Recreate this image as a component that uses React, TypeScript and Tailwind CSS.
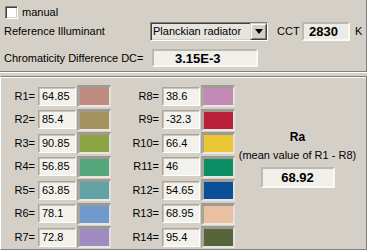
import React from 'react';

// ==========================================
// Data
// ==========================================

interface Sample {
  label: string;
  value: string;
  color: string;
}

const LEFT: Sample[] = [
  { label: 'R1=', value: '64.85', color: 'bg-[#bf8a80]' },
  { label: 'R2=', value: '85.4', color: 'bg-[#a59060]' },
  { label: 'R3=', value: '90.85', color: 'bg-[#8da442]' },
  { label: 'R4=', value: '56.85', color: 'bg-[#53a77a]' },
  { label: 'R5=', value: '63.85', color: 'bg-[#62a2a4]' },
  { label: 'R6=', value: '78.1', color: 'bg-[#7099cc]' },
  { label: 'R7=', value: '72.8', color: 'bg-[#9f8bc0]' },
];

const RIGHT: Sample[] = [
  { label: 'R8=', value: '38.6', color: 'bg-[#c28bb6]' },
  { label: 'R9=', value: '-32.3', color: 'bg-[#ba1f38]' },
  { label: 'R10=', value: '66.4', color: 'bg-[#e9c734]' },
  { label: 'R11=', value: '46', color: 'bg-[#0d8f66]' },
  { label: 'R12=', value: '54.65', color: 'bg-[#0a4f98]' },
  { label: 'R13=', value: '68.95', color: 'bg-[#ebbfa2]' },
  { label: 'R14=', value: '95.4', color: 'bg-[#57653a]' },
];

// ==========================================
// Small pieces
// ==========================================

const ValueBox: React.FC<{ value: string }> = ({ value }) => (
  <div className="w-[38px] h-[19px] flex items-center pl-[3px] bg-[#f2f1ec] border border-t-[#a9a59c] border-l-[#a9a59c] border-b-[#ffffff] border-r-[#ffffff] shadow-[inset_1px_1px_0_#c9c5bd]">
    {value}
  </div>
);

const Swatch: React.FC<{ color: string }> = ({ color }) => (
  <div className="w-[34px] h-[22px] border-t-[3px] border-l-[3px] border-b-2 border-r-2 border-t-[#9e9a91] border-l-[#a8a49b] border-b-[#e9e7e1] border-r-[#e3e1da]">
    <div className={`w-full h-full ${color}`} />
  </div>
);

const SampleRow: React.FC<{ sample: Sample; labelWidth: string }> = ({ sample, labelWidth }) => (
  <div className="h-[22px] flex items-center">
    <div className={`${labelWidth} text-right pr-[3px]`}>{sample.label}</div>
    <ValueBox value={sample.value} />
    <div className="ml-[1px]">
      <Swatch color={sample.color} />
    </div>
  </div>
);

// ==========================================
// App
// ==========================================

export default function App() {
  return (
    <div
      className="w-[367px] h-[251px] bg-[#d4d0c8] text-[11px] leading-[13px] text-black overflow-hidden"
      style={{ fontFamily: '"Liberation Sans", Arial, sans-serif' }}
    >
      {/* top panel */}
      <div className="h-[72px] border-b border-r border-b-[#808080] border-r-[#808080] shadow-[0_1px_0_#ffffff,1px_0_0_#ffffff] flex flex-col">
        <div className="mt-[6px] ml-[5px] h-[13px] flex items-center">
          <div className="w-[13px] h-[13px] bg-white border border-t-[#808080] border-l-[#808080] border-b-white border-r-white shadow-[inset_1px_1px_0_#404040,inset_-1px_-1px_0_#d4d0c8]" />
          <span className="ml-[4px]">manual</span>
        </div>

        <div className="mt-[3px] h-[19px] flex items-center">
          <div className="w-[150px] pl-[4px]">Reference Illuminant</div>
          <div className="w-[118px] h-[19px] flex bg-[#e6e4de] border border-t-[#808080] border-l-[#808080] border-b-white border-r-white shadow-[inset_1px_1px_0_#404040,inset_-1px_-1px_0_#d4d0c8]">
            <div className="flex-1 flex items-center pl-[2px]">Planckian radiator</div>
            <div className="w-[17px] h-[17px] bg-[#d4d0c8] border border-t-[#d4d0c8] border-l-[#d4d0c8] border-b-[#404040] border-r-[#404040] shadow-[inset_1px_1px_0_#ffffff,inset_-1px_-1px_0_#808080] flex items-center justify-center">
              <svg width="8" height="5" viewBox="0 0 8 5">
                <path d="M0 0h8L4 5z" fill="#000" />
              </svg>
            </div>
          </div>
          <div className="w-[34px] pl-[9px]">CCT</div>
          <div className="w-[48px] h-[19px] flex items-center pl-[5px] bg-[#ecebe6] border-2 border-t-[#bcb8b0] border-l-[#bcb8b0] border-b-[#f8f8f6] border-r-[#f8f8f6] text-[13px] font-bold">
            2830
          </div>
          <div className="ml-[5px]">K</div>
        </div>

        <div className="mt-[8px] h-[18px] flex items-center">
          <div className="w-[152px] pl-[4px]">Chromaticity Difference DC=</div>
          <div className="w-[106px] h-[18px] flex items-center pl-[21px] bg-[#f0efea] border-2 border-t-[#bcb8b0] border-l-[#bcb8b0] border-b-[#f8f8f6] border-r-[#f8f8f6] text-[13px] font-bold">
            3.15E-3
          </div>
        </div>
      </div>

      {/* bottom panel */}
      <div className="mt-[4px] h-[174px] border-t border-b border-r border-l border-t-[#808080] border-b-[#808080] border-r-[#808080] border-l-white shadow-[inset_0_1px_0_#ffffff,0_1px_0_#ffffff,1px_0_0_#ffffff] flex">
        <div className="pt-[8px] flex flex-col gap-[1.5px]">
          {LEFT.map((s) => (
            <SampleRow key={s.label} sample={s} labelWidth="w-[37px]" />
          ))}
        </div>
        <div className="pt-[8px] flex flex-col gap-[1.5px]">
          {RIGHT.map((s) => (
            <SampleRow key={s.label} sample={s} labelWidth="w-[51px]" />
          ))}
        </div>
        <div className="flex-1 pr-[6px] pt-[53px] flex flex-col items-center">
          <div className="text-[12px] leading-[14px] font-bold">Ra</div>
          <div className="mt-[5px]">(mean value of R1 - R8)</div>
          <div className="mt-[5px] w-[74px] h-[21px] flex items-center justify-center bg-[#f0efea] border-2 border-t-[#bcb8b0] border-l-[#bcb8b0] border-b-[#f8f8f6] border-r-[#f8f8f6] text-[13px] font-bold">
            68.92
          </div>
        </div>
      </div>
    </div>
  );
}
